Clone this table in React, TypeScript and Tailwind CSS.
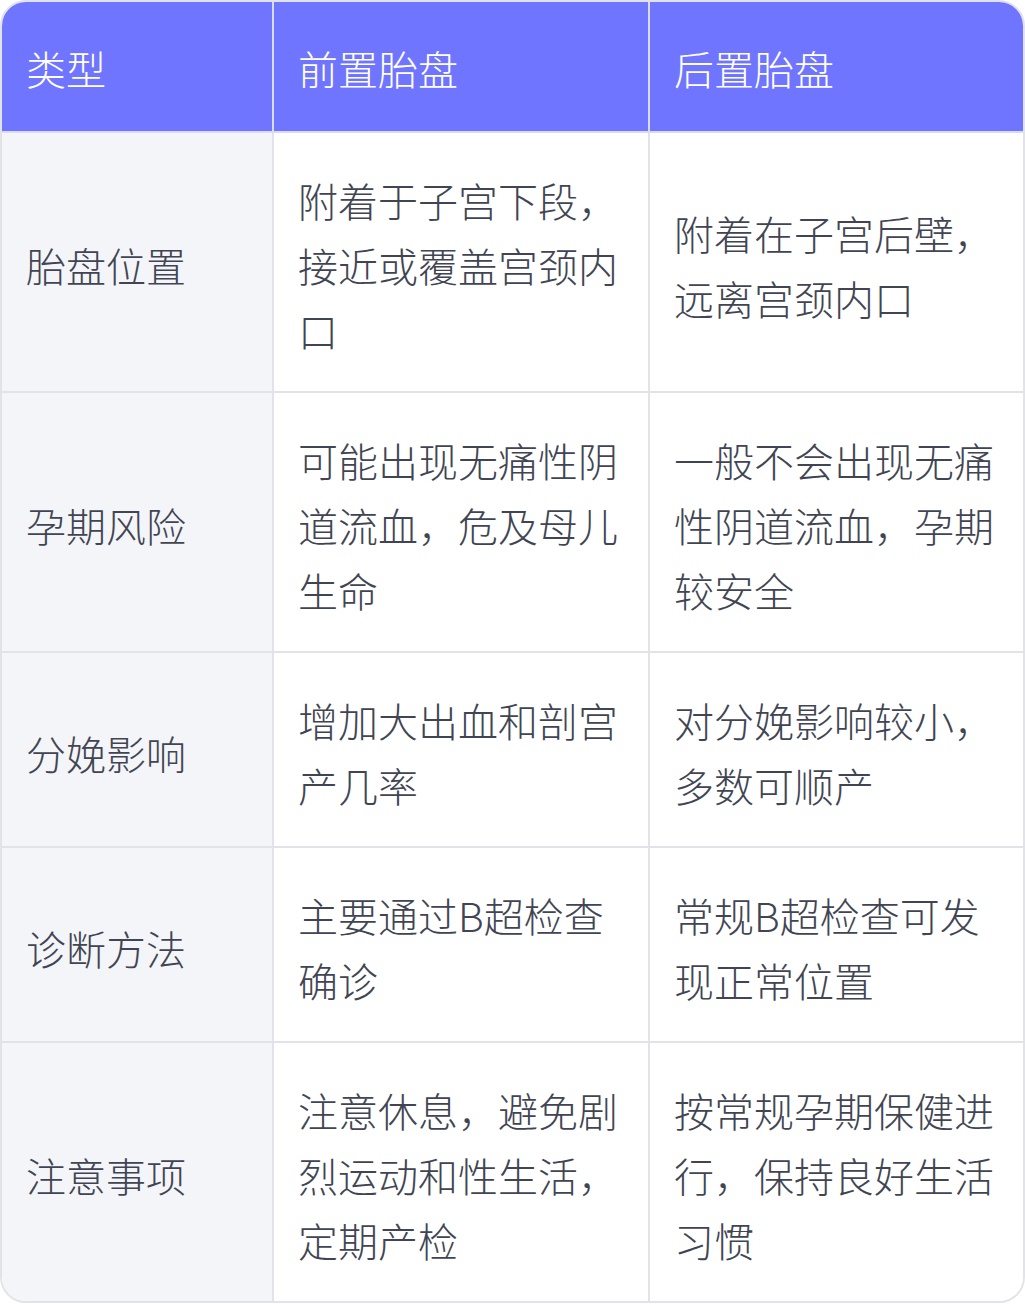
const rows: [string, string, string][] = [
  ['胎盘位置', '附着于子宫下段，接近或覆盖宫颈内口', '附着在子宫后壁，远离宫颈内口'],
  ['孕期风险', '可能出现无痛性阴道流血，危及母儿生命', '一般不会出现无痛性阴道流血，孕期较安全'],
  ['分娩影响', '增加大出血和剖宫产几率', '对分娩影响较小，多数可顺产'],
  ['诊断方法', '主要通过B超检查确诊', '常规B超检查可发现正常位置'],
  ['注意事项', '注意休息，避免剧烈运动和性生活，定期产检', '按常规孕期保健进行，保持良好生活习惯'],
]

export default function App() {
  return (
    <div className="w-[1025px] font-['Noto_Sans_CJK_SC',sans-serif]">
      <div className="overflow-hidden rounded-[26px] border-2 border-[#e2e3e8]">
        <table className="w-full table-fixed border-collapse text-[40px] font-light leading-[65px]">
          <colgroup>
            <col className="w-[271px]" />
            <col className="w-[376px]" />
            <col />
          </colgroup>
          <thead>
            <tr className="bg-[#7075ff] text-white">
              <th className="border-b-2 border-r-2 border-[#d9dbf0] pl-[24px] pr-[25px] pt-[34px] pb-[30px] text-left font-light">类型</th>
              <th className="border-b-2 border-r-2 border-[#d9dbf0] pl-[24px] pr-[25px] pt-[34px] pb-[30px] text-left font-light">前置胎盘</th>
              <th className="border-b-2 border-[#d9dbf0] pl-[24px] pr-[25px] pt-[34px] pb-[30px] text-left font-light">后置胎盘</th>
            </tr>
          </thead>
          <tbody className="text-[#414553]">
            {rows.map((r, i) => (
              <tr key={r[0]}>
                <td className={`border-r-2 border-[#e2e3e8] bg-[#f4f5f9] pl-[24px] pr-[25px] pt-[35px] pb-[28px] align-middle ${i < rows.length - 1 ? 'border-b-2' : ''}`}>{r[0]}</td>
                <td className={`border-r-2 border-[#e2e3e8] bg-white pl-[24px] pr-[25px] pt-[35px] pb-[28px] align-middle ${i < rows.length - 1 ? 'border-b-2' : ''}`}>{r[1]}</td>
                <td className={`border-[#e2e3e8] bg-white pl-[24px] pr-[25px] pt-[35px] pb-[28px] align-middle ${i < rows.length - 1 ? 'border-b-2' : ''}`}>{r[2]}</td>
              </tr>
            ))}
          </tbody>
        </table>
      </div>
    </div>
  )
}
